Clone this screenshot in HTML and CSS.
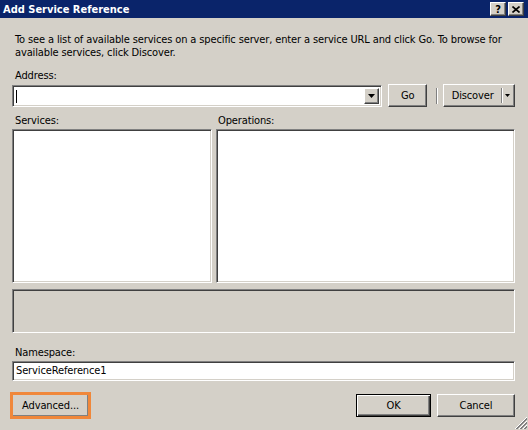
FILE: index.html
```html
<!DOCTYPE html>
<html>
<head>
<meta charset="utf-8">
<title>Add Service Reference</title>
<link rel="stylesheet" href="styles.css">
</head>
<body>
<div class="dialog">
  <div class="titlebar">
    <span class="title">Add Service Reference</span>
    <div class="caption-buttons">
      <span class="cap-btn help">?</span>
      <span class="cap-btn">
        <svg width="8" height="7" viewBox="0 0 8 7"><path d="M0.5 0.5 L7.5 6.5 M7.5 0.5 L0.5 6.5" stroke="#000" stroke-width="1.6" fill="none"/></svg>
      </span>
    </div>
  </div>

  <div class="content">
    <p class="intro">To see a list of available services on a specific server, enter a service URL and click Go. To browse for<br>available services, click Discover.</p>

    <span class="lbl addr-lbl">Address:</span>
    <div class="address-row">
      <div class="combo sunken">
        <span class="caret"></span>
        <span class="drop raised">
          <svg width="7" height="4" viewBox="0 0 7 4"><path d="M0 0 H7 L3.5 4 Z" fill="#000"/></svg>
        </span>
      </div>
      <button class="btn go">Go</button>
      <span class="vsep"></span>
      <div class="btn split">
        <span class="split-main">Discover</span>
        <span class="split-arrow">
          <svg width="5" height="3" viewBox="0 0 5 3"><path d="M0 0 H5 L2.5 3 Z" fill="#000"/></svg>
        </span>
      </div>
    </div>

    <div class="panes">
      <span class="lbl">Services:</span>
      <span class="lbl">Operations:</span>
      <div class="list sunken"></div>
      <div class="list sunken"></div>
    </div>

    <div class="status sunken"></div>

    <span class="lbl ns-lbl">Namespace:</span>
    <div class="field sunken">ServiceReference1</div>

    <div class="footer">
      <button class="btn advanced">Advanced...</button>
      <button class="btn default ok">OK</button>
      <button class="btn cancel">Cancel</button>
    </div>
  </div>

  <span class="grip">
    <svg width="12" height="12" viewBox="0 0 12 12" shape-rendering="crispEdges">
      <path d="M12 0 L0 12" stroke="#fff"/>
      <path d="M12 1 L1 12 M12 2 L2 12" stroke="#808080"/>
      <path d="M12 4 L4 12" stroke="#fff"/>
      <path d="M12 5 L5 12 M12 6 L6 12" stroke="#808080"/>
      <path d="M12 8 L8 12" stroke="#fff"/>
      <path d="M12 9 L9 12 M12 10 L10 12" stroke="#808080"/>
    </svg>
  </span>
</div>
</body>
</html>
```

FILE: styles.css
```css
* { box-sizing: border-box; }

html, body {
  margin: 0;
  padding: 0;
}

body {
  width: 528px;
  height: 430px;
  overflow: hidden;
  background: #d4d0c8;
  color: #000;
  font-family: "DejaVu Sans Condensed", "Liberation Sans", sans-serif;
  font-size: 11px;
  letter-spacing: -0.13px;
}

.dialog {
  position: relative;
  height: 430px;
  display: flex;
  flex-direction: column;
}

/* caption bar */
.titlebar {
  height: 18px;
  background: #0a246a;
  display: flex;
  align-items: center;
  justify-content: space-between;
  padding: 0 4px 0 3px;
}

.title {
  color: #fff;
  font-weight: bold;
  letter-spacing: 0;
}

.caption-buttons {
  display: flex;
  gap: 2px;
}

.cap-btn {
  width: 16px;
  height: 14px;
  background: #d4d0c8;
  border: 1px solid;
  border-color: #fff #404040 #404040 #fff;
  box-shadow: inset -1px -1px #808080;
  display: flex;
  align-items: center;
  justify-content: center;
  font-weight: bold;
  font-size: 11px;
  line-height: 1;
}

/* 3D edges */
.sunken {
  border: 1px solid;
  border-color: #808080 #fff #fff #808080;
  box-shadow: inset 1px 1px #404040, inset -1px -1px #d4d0c8;
}

.raised,
.btn {
  background: #d4d0c8;
  border: 1px solid;
  border-color: #fff #404040 #404040 #fff;
  box-shadow: inset -1px -1px #808080;
}

.btn {
  font: inherit;
  letter-spacing: inherit;
  color: #000;
  padding: 0;
  height: 23px;
  display: flex;
  align-items: center;
  justify-content: center;
}

.btn.default {
  border: 1px solid #000;
  box-shadow: inset 1px 1px #fff, inset -1px -1px #404040, inset -2px -2px #808080;
}

/* body of the dialog */
.content {
  padding: 0 13px 0 12px;
  display: flex;
  flex-direction: column;
}

.intro {
  margin: 15px 0 0 3px;
  line-height: 13px;
  white-space: nowrap;
}

.lbl {
  display: block;
  line-height: 13px;
  padding-left: 3px;
}

.addr-lbl { margin-top: 10px; }

.address-row {
  margin-top: 2px;
  display: flex;
  align-items: flex-start;
}

.combo {
  width: 371px;
  height: 22px;
  margin-top: 1px;
  background: #fff;
  display: flex;
  align-items: stretch;
  justify-content: space-between;
  padding: 2px;
}

.caret {
  width: 1px;
  margin: 2px 0 1px 1px;
  background: #000;
}

.drop {
  width: 15px;
  display: flex;
  align-items: center;
  justify-content: center;
}

.go {
  width: 39px;
  margin-left: 6px;
}

.vsep {
  width: 2px;
  height: 16px;
  margin: 4px 0 0 9px;
  border-left: 1px solid #808080;
  border-right: 1px solid #fff;
}

.split {
  width: 72px;
  margin-left: 5px;
  justify-content: flex-start;
}

.split-main {
  width: 57px;
  text-align: center;
}

.split-arrow {
  height: 15px;
  width: 12px;
  border-left: 1px solid #808080;
  box-shadow: inset 1px 0 #fff;
  display: flex;
  align-items: center;
  justify-content: center;
}

.panes {
  margin-top: 7px;
  display: grid;
  grid-template-columns: 200px 1fr;
  column-gap: 4px;
  row-gap: 2px;
}

.panes .lbl:nth-child(2) { padding-left: 2px; }

.list {
  height: 154px;
  background: #fff;
}

.status {
  margin-top: 6px;
  height: 44px;
  background: #d4d0c8;
}

.ns-lbl { margin-top: 13px; }

.field {
  margin-top: 2px;
  height: 20px;
  background: #fff;
  padding-left: 3px;
  line-height: 18px;
}

.footer {
  margin-top: 13px;
  display: flex;
}

.advanced {
  width: 77px;
  outline: 3px solid #f0873a;
  outline-offset: -1px;
}

.ok {
  width: 75px;
  margin-left: auto;
}

.cancel {
  width: 78px;
  margin-left: 6px;
}

/* size grip overlaid in the corner */
.grip {
  position: absolute;
  right: 1px;
  bottom: 1px;
  width: 12px;
  height: 12px;
  line-height: 0;
}
```
